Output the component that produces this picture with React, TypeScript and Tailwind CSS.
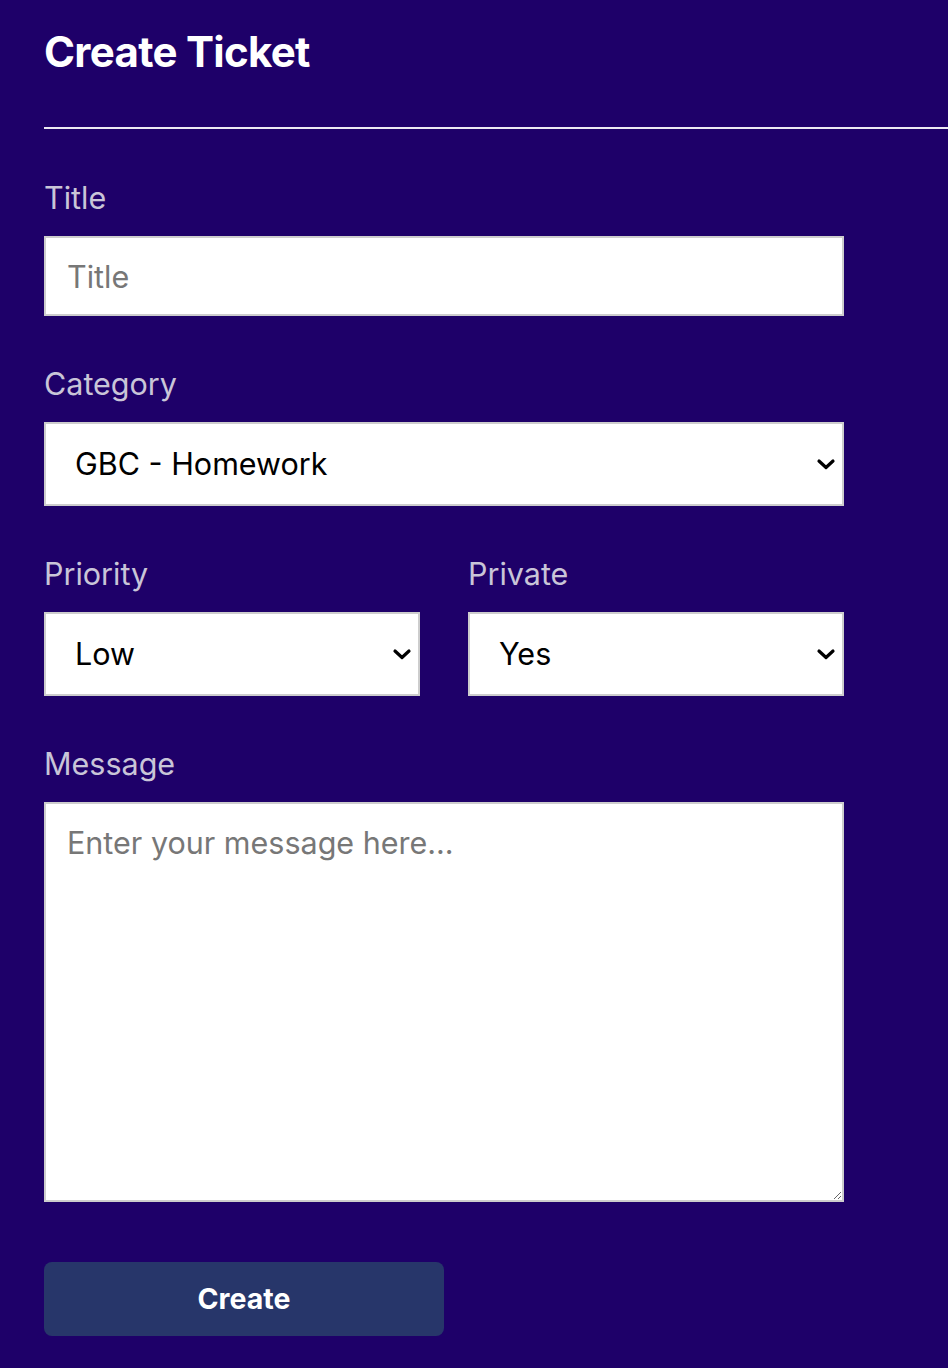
import React from "react";

function Chevron() {
  return (
    <svg
      className="pointer-events-none absolute right-[8px] top-1/2 -translate-y-1/2"
      width="20"
      height="13"
      viewBox="0 0 20 13"
      fill="none"
    >
      <path d="M3 3.5 L10 10 L17 3.5" stroke="#000" strokeWidth="3.2" strokeLinecap="round" strokeLinejoin="round" />
    </svg>
  );
}

function Select({ value, options }: { value: string; options: string[] }) {
  return (
    <div className="relative w-full">
      <select
        defaultValue={value}
        className="h-[84px] w-full appearance-none border-2 border-[#cdcdcd] bg-white pl-[29px] pr-12 text-[30.5px] text-black outline-none"
      >
        {options.map((o) => (
          <option key={o}>{o}</option>
        ))}
      </select>
      <Chevron />
    </div>
  );
}

function Label({ children }: { children: React.ReactNode }) {
  return <label className="mb-5 block text-[30.5px] leading-[36px] text-[#c9c5d8]">{children}</label>;
}

export default function App() {
  return (
    <div
      className="min-h-[1368px] w-full bg-[#1e0069] pt-[25px]"
      style={{ fontFamily: "Inter, 'Noto Sans', sans-serif" }}
    >
      <h1 className="ml-[44px] text-[42px] font-bold leading-[53px] tracking-[-0.7px] text-white">Create Ticket</h1>
      <div className="ml-[44px] mt-[49px] h-[2px] bg-[#ebe8f2]" />
      <form className="ml-[44px] mt-[51px] w-[800px]">
        <div>
          <Label>Title</Label>
          <input
            placeholder="Title"
            className="h-[80px] w-full border-2 border-[#cdcdcd] bg-white px-[21px] text-[30.5px] text-black outline-none placeholder:text-[#777777]"
          />
        </div>
        <div className="mt-[50px]">
          <Label>Category</Label>
          <Select value="GBC - Homework" options={["GBC - Homework", "GBC - General", "Other"]} />
        </div>
        <div className="mt-[50px] grid grid-cols-2 gap-12">
          <div>
            <Label>Priority</Label>
            <Select value="Low" options={["Low", "Medium", "High"]} />
          </div>
          <div>
            <Label>Private</Label>
            <Select value="Yes" options={["Yes", "No"]} />
          </div>
        </div>
        <div className="mt-[50px]">
          <Label>Message</Label>
          <textarea
            placeholder="Enter your message here..."
            className="block h-[400px] w-full border-2 border-[#cdcdcd] bg-white px-[21px] pt-[21px] text-[30.5px] leading-[36px] text-black outline-none placeholder:text-[#777777]"
          />
        </div>
        <button
          type="button"
          className="mt-[60px] h-[74px] w-[400px] rounded-[8px] bg-[#27366a] text-[28.5px] font-bold text-white"
        >
          Create
        </button>
      </form>
    </div>
  );
}
